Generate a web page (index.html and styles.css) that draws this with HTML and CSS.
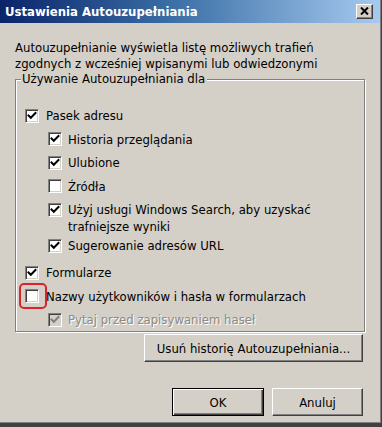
FILE: index.html
```html
<!DOCTYPE html>
<html lang="pl">
<head>
<meta charset="utf-8">
<title>Ustawienia Autouzupełniania</title>
<link rel="stylesheet" href="styles.css">
</head>
<body>
<div class="window">
  <div class="titlebar">
    <span class="title">Ustawienia Autouzupełniania</span>
    <span class="close">
      <svg width="9" height="8" viewBox="0 0 9 8"><path d="M1 0.5 L8 7.5 M8 0.5 L1 7.5" stroke="#000" stroke-width="2" fill="none"/></svg>
    </span>
  </div>
  <div class="content">
    <p class="desc">Autouzupełnianie wyświetla listę możliwych trafień<br>zgodnych z wcześniej wpisanymi lub odwiedzonymi</p>
    <fieldset class="group">
      <legend>Używanie Autouzupełniania dla</legend>
      <div class="opts">
        <div class="opt">
          <span class="cb on"><svg viewBox="0 0 12 12"><polyline points="2.5,5.5 4.8,7.8 9.5,3" /></svg></span>
          <span class="lbl">Pasek adresu</span>
        </div>
        <div class="opt sub">
          <span class="cb on"><svg viewBox="0 0 12 12"><polyline points="2.5,5.5 4.8,7.8 9.5,3" /></svg></span>
          <span class="lbl">Historia przeglądania</span>
        </div>
        <div class="opt sub">
          <span class="cb on"><svg viewBox="0 0 12 12"><polyline points="2.5,5.5 4.8,7.8 9.5,3" /></svg></span>
          <span class="lbl">Ulubione</span>
        </div>
        <div class="opt sub">
          <span class="cb"></span>
          <span class="lbl">Źródła</span>
        </div>
        <div class="opt sub">
          <span class="cb on"><svg viewBox="0 0 12 12"><polyline points="2.5,5.5 4.8,7.8 9.5,3" /></svg></span>
          <span class="lbl">Użyj usługi Windows Search, aby uzyskać<br>trafniejsze wyniki</span>
        </div>
        <div class="opt sub tight">
          <span class="cb on"><svg viewBox="0 0 12 12"><polyline points="2.5,5.5 4.8,7.8 9.5,3" /></svg></span>
          <span class="lbl">Sugerowanie adresów URL</span>
        </div>
        <div class="opt loose">
          <span class="cb on"><svg viewBox="0 0 12 12"><polyline points="2.5,5.5 4.8,7.8 9.5,3" /></svg></span>
          <span class="lbl">Formularze</span>
        </div>
        <div class="opt">
          <span class="cb marked"></span>
          <span class="lbl">Nazwy użytkowników i hasła w formularzach</span>
        </div>
        <div class="opt sub disabled">
          <span class="cb on"><svg viewBox="0 0 12 12"><polyline points="2.5,5.5 4.8,7.8 9.5,3" /></svg></span>
          <span class="lbl">Pytaj przed zapisywaniem haseł</span>
        </div>
      </div>
    </fieldset>
    <div class="row-clear">
      <button class="btn wide">Usuń historię Autouzupełniania...</button>
    </div>
    <div class="row-actions">
      <button class="btn std default">OK</button>
      <button class="btn std">Anuluj</button>
    </div>
  </div>
</div>
</body>
</html>
```
FILE: styles.css
```css
html, body {
  margin: 0;
  padding: 0;
}
body {
  background: #404040;
  width: 382px;
  height: 427px;
  overflow: hidden;
  font-family: "DejaVu Sans Condensed", "DejaVu Sans", sans-serif;
  font-size: 13px;
  color: #000;
}
.window {
  width: 382px;
  height: 424px;
  background: #d4d0c8;
  box-shadow: inset -1px -1px 0 #404040, inset -2px -2px 0 #808080;
  display: flex;
  flex-direction: column;
}
.titlebar {
  height: 23px;
  margin-right: 2px;
  background: linear-gradient(to right, #0a246a 0%, #3a6ea5 45%, #a6caf0 100%);
  display: flex;
  align-items: center;
  justify-content: space-between;
  padding: 0 7px 0 5px;
}
.title {
  color: #fff;
  font-weight: bold;
  font-size: 13px;
  line-height: 23px;
  white-space: nowrap;
}
.close {
  width: 17px;
  height: 15px;
  box-sizing: border-box;
  background: #d4d0c8;
  border-top: 1px solid #fff;
  border-left: 1px solid #fff;
  border-right: 1px solid #404040;
  border-bottom: 1px solid #404040;
  box-shadow: inset -1px -1px 0 #808080;
  display: flex;
  align-items: center;
  justify-content: center;
}
.close svg {
  display: block;
  margin: 0 1px 1px 0;
}
.content {
  padding: 17px 17px 0 15px;
  display: flex;
  flex-direction: column;
}
.desc {
  margin: 0;
  line-height: 16px;
  white-space: nowrap;
}
.group {
  margin: 1px 0 0 0;
  padding: 0 0 3px 0;
  border: 1px solid #808080;
  box-shadow: inset 1px 1px 0 #fff, 1px 1px 0 #fff;
  min-width: 0;
}
.group legend {
  margin-left: 5px;
  padding: 0 2px 0 1px;
  line-height: 12px;
  background: #d4d0c8;
  white-space: nowrap;
}
.opts {
  padding-top: 22px;
  display: flex;
  flex-direction: column;
  gap: 6.5px;
}
.opt {
  display: flex;
  align-items: flex-start;
  line-height: 17px;
  padding-left: 9px;
  white-space: nowrap;
}
.opt.sub {
  padding-left: 32px;
}
.opt.tight {
  margin-top: -4.5px;
}
.opt.loose {
  margin-top: 3.5px;
}
.cb {
  position: relative;
  flex: none;
  width: 14px;
  height: 14px;
  box-sizing: border-box;
  margin-top: 1.5px;
  margin-right: 7px;
  background: #fff;
  border-top: 1px solid #808080;
  border-left: 1px solid #808080;
  border-right: 1px solid #fff;
  border-bottom: 1px solid #fff;
  box-shadow: inset 1px 1px 0 #404040, inset -1px -1px 0 #d4d0c8;
}
.cb svg {
  display: block;
  width: 12px;
  height: 12px;
}
.cb polyline {
  fill: none;
  stroke: #000;
  stroke-width: 2;
  stroke-linecap: square;
}
.cb.marked::after {
  content: "";
  position: absolute;
  left: -7px;
  top: -7px;
  width: 24px;
  height: 22px;
  border: 2px solid #d9252a;
  border-radius: 5px;
}
.opt.sub .cb {
  margin-right: 6px;
}
.disabled .cb {
  background: #d4d0c8;
}
.disabled .cb polyline {
  stroke: #808080;
}
.disabled .lbl {
  color: #8d8a84;
  text-shadow: 1px 1px 0 #fff;
}
.btn {
  font-family: inherit;
  font-size: 13px;
  color: #000;
  background: #d4d0c8;
  height: 28px;
  box-sizing: border-box;
  padding: 0;
  border-top: 1px solid #fff;
  border-left: 1px solid #fff;
  border-right: 1px solid #404040;
  border-bottom: 1px solid #404040;
  box-shadow: inset -1px -1px 0 #808080;
  border-radius: 0;
  white-space: nowrap;
}
.row-clear {
  display: flex;
  justify-content: flex-end;
  margin-top: 2px;
  padding-right: 2px;
}
.btn.wide {
  width: 219px;
}
.row-actions {
  display: flex;
  justify-content: flex-end;
  gap: 8px;
  margin-top: 26px;
  padding-right: 2px;
}
.btn.std {
  width: 91px;
}
.btn.default {
  width: 92px;
  border: 1px solid #000;
  box-shadow: inset 1px 1px 0 #fff, inset -1px -1px 0 #404040, inset -2px -2px 0 #808080;
}
```
